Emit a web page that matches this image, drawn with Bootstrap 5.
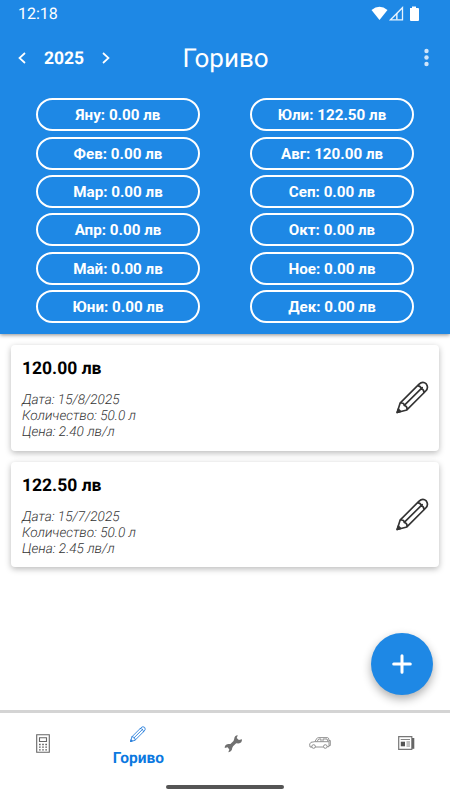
<!DOCTYPE html>
<html lang="bg">
<head>
<meta charset="utf-8">
<meta name="viewport" content="width=device-width, initial-scale=1">
<title>Гориво</title>
<link href="https://cdn.jsdelivr.net/npm/bootstrap@5.3.0/dist/css/bootstrap.min.css" rel="stylesheet">
<style>
html, body { height: 100%; }
body { font-family: Roboto, "Liberation Sans", sans-serif; background: #fff; color: #000; overflow: hidden; text-rendering: geometricPrecision; }
.app-top { background: #1e88e5; height: 334px; flex: none; box-shadow: 0 1px 4px rgba(0,0,0,.45); z-index: 1; }
.status-bar { height: 27px; padding: 0 29px 0 18px; font-size: 16px; line-height: 27px; }
.toolbar { height: 62px; padding: 0 17px 0 18px; }
.toolbar > div { width: 110px; }
.year { font-size: 17.500px; font-weight: 700; line-height: 20px; margin: 1px 17.500px 0 18px; }
.title { font-size: 26px; font-weight: 400; line-height: 32px; margin-top: 2px; }
.months { padding: 9.300px 36px 0; column-gap: 50px; row-gap: 5.4px; display: grid; grid-template-columns: 1fr 1fr; grid-template-rows: repeat(6, 33px); grid-auto-flow: column; }
.month { border: 2px solid #fff; color: #fff; font-size: 15.2px; font-weight: 700; line-height: 31px; padding: 0; }
.records { padding: 11px; gap: 11px; }
.record { height: 105.500px; border: 0; border-radius: 4px; box-shadow: 0 2px 6px rgba(0,0,0,.28); padding: 14px 10px 0 11px; }
.amount { font-size: 17.5px; font-weight: 700; line-height: 20px; margin-bottom: 13px; }
.details { font-size: 13.6px; font-weight: 300; font-style: italic; line-height: 16px; color: #333; }
.edit { margin: 22px 0 0 0; }
.fab { width: 62px; height: 62px; right: 17px; bottom: 105px; background: #1e88e5; box-shadow: 0 4px 10px rgba(0,0,0,.32); border: 0; }
.bottom-nav { height: 90px; flex: none; border-top: 3px solid #d4d4d4; }
.tabs { height: 60px; }
.tab { flex: 0 0 86.600px; }
.tab-active { flex: 1 1 auto; padding-top: 7px; }
.tab-label { color: #0b79e0; font-size: 15.500px; font-weight: 700; line-height: 18px; margin-top: 7px; }
.home-bar { width: 118px; height: 4px; background: #555; margin-top: 12px; }
</style>
<script src="https://cdn.jsdelivr.net/npm/bootstrap@5.3.0/dist/js/bootstrap.bundle.min.js"></script>
</head>
<body>
<svg class="d-none">
  <symbol id="pencil" viewBox="0 0 34 34">
    <g fill="none" stroke="currentColor" stroke-linejoin="round" stroke-linecap="round">
      <path d="M1.2 32.4 4.2 22.8 23.5 3.5Q27.5-.2 31.2 3 34 7 30.4 10.6L11.2 29.8ZM4.2 22.8Q8 22 8.5 25.2 12 26 11.2 29.8M8.5 25.2 27 6.8M21.8 5.2Q24.8 4.5 26 7.8 29 9 28.8 12.2"/>
      <path d="M1.2 32.4 2.4 29 4.6 31.3Z" fill="currentColor"/>
    </g>
  </symbol>
</svg>
<div class="d-flex flex-column vh-100 position-relative">
  <header class="app-top text-white position-relative">
    <div class="status-bar d-flex justify-content-between align-items-center">
      <span>12:18</span>
      <svg width="50" height="16" viewBox="0 0 50 16" fill="#fff">
        <path d="M.5 4Q8.500-2.500 16.500 4L8.500 14Z"/>
        <path d="M19.500 13.800 31.500 1.700V13.800Z" fill="none" stroke="#e8f3fd" stroke-width="1.300"/><path d="M25.200 8.200 26.500 7V13.500H25.200Z"/>
        <path d="M39 2H41V.5H45V2H47Q48 2 48 3V14Q48 15 47 15H40Q39 15 39 14Z"/>
      </svg>
    </div>
    <div class="toolbar d-flex align-items-center justify-content-between">
      <div class="d-flex align-items-center">
        <svg width="8" height="12" viewBox="0 0 8 12" fill="none" stroke="#fff" stroke-width="1.700"><path d="M7 1 1.500 6 7 11"/></svg>
        <span class="year">2025</span>
        <svg width="10" height="12" viewBox="0 0 10 12" fill="none" stroke="#fff" stroke-width="1.700"><path d="M1 1 6.500 6 1 11"/></svg>
      </div>
      <h1 class="title mb-0">Гориво</h1>
      <div class="d-flex justify-content-end pe-1">
        <svg width="5" height="20" viewBox="0 0 5 20" fill="#cfe5fa"><circle cx="2.500" cy="3" r="2.200"/><circle cx="2.500" cy="9.500" r="2.200"/><circle cx="2.500" cy="16" r="2.200"/></svg>
      </div>
    </div>
    <div class="months">
      <button class="btn rounded-pill month">Яну: 0.00 лв</button>
      <button class="btn rounded-pill month">Фев: 0.00 лв</button>
      <button class="btn rounded-pill month">Мар: 0.00 лв</button>
      <button class="btn rounded-pill month">Апр: 0.00 лв</button>
      <button class="btn rounded-pill month">Май: 0.00 лв</button>
      <button class="btn rounded-pill month">Юни: 0.00 лв</button>
      <button class="btn rounded-pill month">Юли: 122.50 лв</button>
      <button class="btn rounded-pill month">Авг: 120.00 лв</button>
      <button class="btn rounded-pill month">Сеп: 0.00 лв</button>
      <button class="btn rounded-pill month">Окт: 0.00 лв</button>
      <button class="btn rounded-pill month">Ное: 0.00 лв</button>
      <button class="btn rounded-pill month">Дек: 0.00 лв</button>
    </div>
  </header>
  <main class="records d-flex flex-column flex-grow-1">
    <article class="card record flex-row justify-content-between align-items-start">
      <div>
        <div class="amount">120.00 лв</div>
        <div class="details">Дата: 15/8/2025<br>Количество: 50.0 л<br>Цена: 2.40 лв/л</div>
      </div>
      <svg class="edit" width="33" height="33" color="#333" stroke-width="1.700"><use href="#pencil"/></svg>
    </article>
    <article class="card record flex-row justify-content-between align-items-start">
      <div>
        <div class="amount">122.50 лв</div>
        <div class="details">Дата: 15/7/2025<br>Количество: 50.0 л<br>Цена: 2.45 лв/л</div>
      </div>
      <svg class="edit" width="33" height="33" color="#333" stroke-width="1.700"><use href="#pencil"/></svg>
    </article>
  </main>
  <button class="fab rounded-circle position-absolute d-flex align-items-center justify-content-center p-0" aria-label="+">
    <svg width="20" height="20" viewBox="0 0 20 20" stroke="#fff" stroke-width="3" stroke-linecap="round"><path d="M10 1.700V18.300M1.700 10H18.300"/></svg>
  </button>
  <nav class="bottom-nav">
    <div class="tabs d-flex">
      <div class="tab d-flex align-items-center justify-content-center">
        <svg width="14" height="19" viewBox="0 0 14 19" fill="none" stroke="#666"><path d="M.7.700H13.300V18.200H.7Z" stroke-width="1.100"/><path d="M3.500 3.700H10.500V7.500H3.500Z" stroke-width="1.100"/><path d="M3 10.500H11M3 13.200H11M3 15.800H11" stroke-width="1.300" stroke-dasharray="1.700 1.450"/></svg>
      </div>
      <div class="tab-active d-flex flex-column align-items-center justify-content-center">
        <svg width="16" height="16" color="#257ddb" stroke-width="1.900"><use href="#pencil"/></svg>
        <span class="tab-label">Гориво</span>
      </div>
      <div class="tab d-flex align-items-center justify-content-center">
        <svg width="19" height="19" viewBox="0 0 19 19" fill="#707070"><path d="M13.800 1.200 12.700 4 14.900 6.100 18 5.200Q18.200 8.800 14.500 9.600L12.200 9.300 9.100 12.300 8.200 14Q8.200 17.500 4.300 18.200L5.300 15.400 3.600 13.200.7 13.900Q.6 10.300 4.200 9.900L6.400 10 9.500 7 10.200 5Q10.400 1.500 13.800 1.200Z"/></svg>
      </div>
      <div class="tab d-flex align-items-center justify-content-center">
        <svg width="22" height="12" viewBox="0 0 22 12" fill="none" stroke="#777" stroke-width=".8"><path d="M3 10H1Q-.2 6.500 2 5.300L5.800 4.700 7.800 1.500Q8.300.6 9.500.6H18.500Q19.700.6 20 3V9.700H18.200M6.200 10H14.300M6 4.700H19.500M8 4.500 9.700 2H12V4.500M14 4.500V2H18L19 4.500M20.200 3.500H21.300V8.500H20.200"/><circle cx="4.600" cy="9.500" r="1.800"/><circle cx="16.300" cy="9.500" r="1.800"/></svg>
      </div>
      <div class="tab d-flex align-items-center justify-content-center">
        <svg width="17" height="14" viewBox="0 0 17 14" fill="none" stroke="#777"><path d="M.7.700H13.800V13.300H.7Z" stroke-width="1.200"/><path d="M14 2H16.300V12.800H14Z" fill="#666" stroke="none"/><path d="M2.700 3.500H12M8.500 6H12M8.500 8H12M8.500 10H12" stroke-width=".9"/><path d="M2.800 5.700H7V10.300H2.800Z" fill="#555" stroke="none"/></svg>
      </div>
    </div>
    <div class="home-bar rounded-pill mx-auto"></div>
  </nav>
</div>
</body>
</html>
